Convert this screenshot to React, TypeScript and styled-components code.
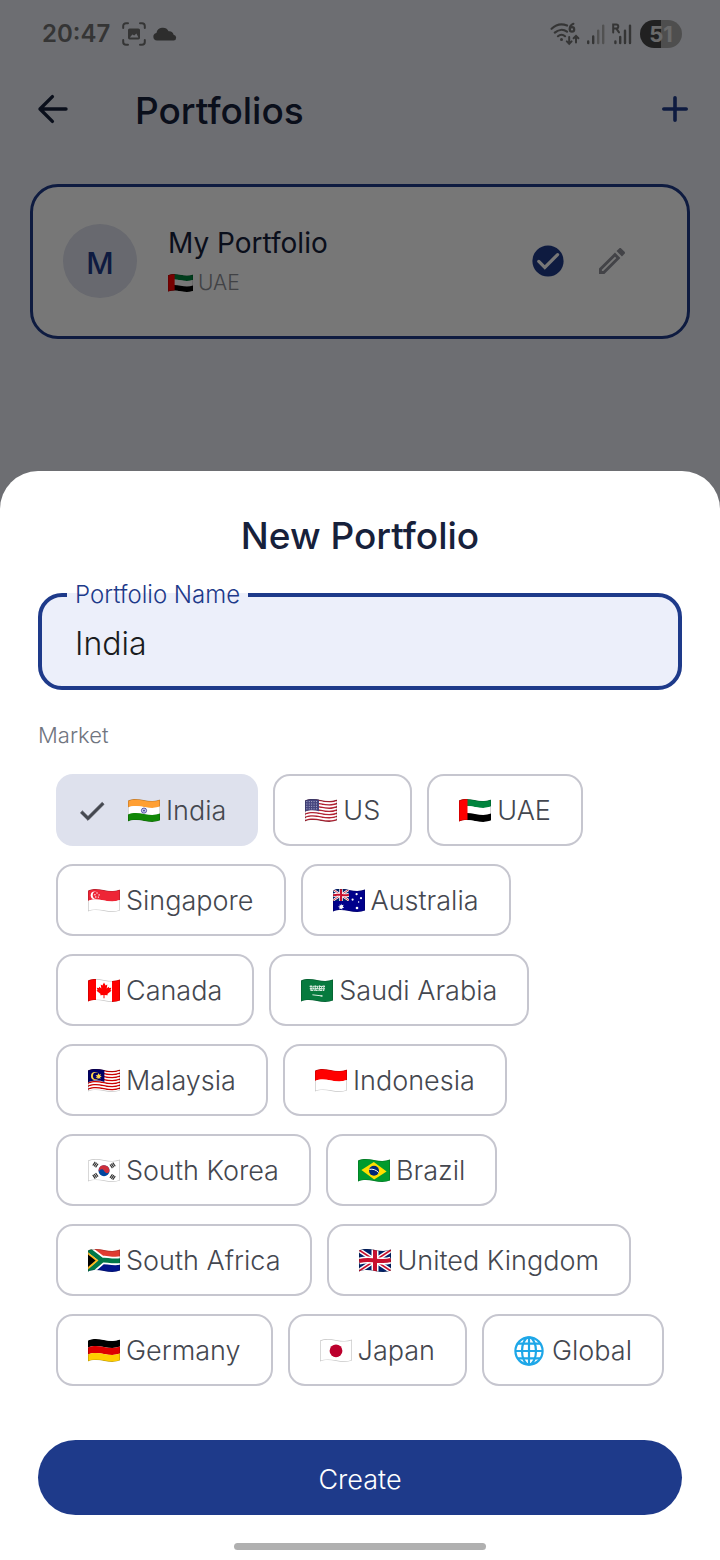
import React, { useId, useState } from "react";
import styled, { createGlobalStyle } from "styled-components";

const color = {
  brand: "#1e3a8a",
  ink: "#17213b",
  page: "#e9ecf5",
  card: "#ffffff",
  tint: "#dee1ed",
  field: "#eceffa",
  line: "#c6c6cf",
  chipText: "#44474f",
  muted: "#70757f",
  status: "#727272",
};

const GlobalStyle = createGlobalStyle`
  *, *::before, *::after { box-sizing: border-box; }
  body { margin: 0; background: ${color.page}; }
  body, button, input { font-family: Inter, "Open Sans", sans-serif; }
`;

/* ---------- Flags ---------- */

const topEdge = (y: number) =>
  `M0 ${y + 1.5} C5 ${y - 0.5} 10 ${y - 0.2} 16 ${y + 1} S27 ${y + 2.5} 32 ${y + 0.6}`;
const band = (from: number, to: number) =>
  `${topEdge(from)} L32 ${to + 0.6} C27 ${to + 2.5} 22 ${to + 2.2} 16 ${to + 1} C10 ${to - 0.2} 5 ${to - 0.5} 0 ${to + 1.5} Z`;

const Bands = ({ colors, height = 21 }: { colors: string[]; height?: number }) => (
  <>
    {colors.map((c, i) => (
      <path
        key={i}
        d={band((i * height) / colors.length, ((i + 1) * height) / colors.length)}
        fill={c}
      />
    ))}
  </>
);

const UnionJack = () => (
  <>
    <path d="M-1 -1H33V25H-1Z" fill="#012169" />
    <path d="M0 1 L32 22 M32 1 L0 22" stroke="#fff" strokeWidth="4.4" />
    <path d="M0 1 L32 22 M32 1 L0 22" stroke="#c8102e" strokeWidth="1.6" />
    <path d="M16 -1V25 M0 12 C8 10 10 10.8 16 11.5 S26 13 32 11" stroke="#fff" strokeWidth="7" fill="none" />
    <path d="M16 -1V25 M0 12 C8 10 10 10.8 16 11.5 S26 13 32 11" stroke="#c8102e" strokeWidth="4" fill="none" />
  </>
);

const stripes = (a: string, b: string, n: number) =>
  Array.from({ length: n }, (_, i) => (i % 2 ? b : a));

const trigram = (x: number, y: number, angle: number) => (
  <g transform={`translate(${x} ${y}) rotate(${angle})`}>
    <path d="M-2.2 -1.7H2.2M-2.2 0H2.2M-2.2 1.7H2.2" stroke="#333" strokeWidth="1.2" />
  </g>
);

const flagArt: Record<string, React.ReactNode> = {
  India: (
    <>
      <Bands colors={["#ff9f33", "#ffffff", "#128807"]} />
      <circle cx="16" cy="11.6" r="2.6" fill="#c9cbea" stroke="#3a3a99" strokeWidth="0.8" />
      <circle cx="16" cy="11.6" r="0.9" fill="#3a3a99" />
    </>
  ),
  US: (
    <>
      <Bands colors={stripes("#b22334", "#ffffff", 13)} />
      <path d="M0 0 H14 V12.2 C10 11 5 10.5 0 12.6Z" fill="#46467f" />
      {[2.6, 5, 7.4, 9.8].map((y) => (
        <path key={y} d={`M1.4 ${y} H13.4`} stroke="#c7c7de" strokeWidth="0.9" strokeDasharray="0.9 1.5" />
      ))}
    </>
  ),
  UAE: (
    <>
      <Bands colors={["#00843d", "#ffffff", "#000000"]} />
      <path d="M0 0H8.5V24H0Z" fill="#ff0000" />
    </>
  ),
  Singapore: (
    <>
      <Bands colors={["#ee2536", "#ffffff"]} />
      <circle cx="6.6" cy="6.3" r="3.9" fill="#fff" />
      <circle cx="8.4" cy="6.3" r="3.7" fill="#ee2536" />
      <g fill="#fff">
        <circle cx="9" cy="4" r="0.7" />
        <circle cx="6.9" cy="5.7" r="0.7" />
        <circle cx="11.1" cy="5.9" r="0.7" />
        <circle cx="7.8" cy="8" r="0.7" />
        <circle cx="10.4" cy="8.1" r="0.7" />
      </g>
    </>
  ),
  Australia: (
    <>
      <path d="M0 0H32V24H0Z" fill="#00008b" />
      <svg x="0" y="0" width="16" height="12" viewBox="0 0 32 23" preserveAspectRatio="none">
        <UnionJack />
      </svg>
      <g fill="#fff">
        <path d="M8 14.4l.8 1.8 1.9-.4-.9 1.7 1.4 1.3-1.9.3-.1 2-1.2-1.5-1.8 1 .6-1.9-1.8-.9 1.9-.5-.5-1.9 1.4 1Z" />
        <circle cx="23.6" cy="5.2" r="1.1" />
        <circle cx="19.6" cy="10.6" r="1.1" />
        <circle cx="28" cy="9.2" r="1.1" />
        <circle cx="24" cy="19" r="1.3" />
        <circle cx="25.6" cy="13" r="0.7" />
      </g>
    </>
  ),
  Canada: (
    <>
      <path d="M0 0H32V24H0Z" fill="#fff" />
      <path d="M0 0H8V24H0ZM24 0H32V24H24Z" fill="#f00" />
      <path
        d="M16 3.6l1.6 2.8 1.7-.8-.6 3.8 1.9-1.7.6 1.4 2.1-.3-.8 2.1 1 .9-4.1 3.2.4 1.3-3.3-.4v3.4h-1v-3.4l-3.3.4.4-1.3-4.1-3.2 1-.9-.8-2.1 2.1.3.6-1.4 1.9 1.7-.6-3.8 1.7.8Z"
        fill="#f00"
      />
    </>
  ),
  "Saudi Arabia": (
    <>
      <path d="M0 0H32V24H0Z" fill="#067a3e" />
      <path d="M8.6 7.4H24M8.8 9.6H23.8M9.6 11.4H23.4" stroke="#d6eade" strokeWidth="1.3" strokeDasharray="2.4 .6 1.2 .5" />
      <path d="M10 6.4v5.2M12 7.4v3M14.2 6.4v5M16.4 7v3M18.4 6.4v5.2M20.6 7v3.4M22.8 6.4v5" stroke="#d6eade" strokeWidth="1" />
      <path d="M11.4 15.8 L21.8 17M20.2 16v1.8" stroke="#d6eade" strokeWidth="1" />
    </>
  ),
  Malaysia: (
    <>
      <Bands colors={stripes("#cc0000", "#ffffff", 14)} />
      <path d="M0 0H16.4V13 C11 11 5 11 0 13.4Z" fill="#000066" />
      <circle cx="7" cy="6.9" r="4" fill="#ffd84d" />
      <circle cx="8.3" cy="6.9" r="3.4" fill="#000066" />
      <path d="M10.5 4l.7 1.7 1.7-.6-.7 1.7 1.6.8-1.7.6.4 1.8-1.6-.9-1.1 1.4-.3-1.8-1.8.1 1.2-1.4-1.3-1.3 1.9.1Z" fill="#ffd84d" />
    </>
  ),
  Indonesia: <Bands colors={["#ff0000", "#ffffff"]} />,
  "South Korea": (
    <>
      <path d="M0 0H32V24H0Z" fill="#fff" />
      <circle cx="16" cy="11.7" r="5.5" fill="#0047a0" />
      <path d="M10.9 9.7 A5.5 5.5 0 0 1 21.4 12.6 C20 15 17.4 14.4 16.2 12 C15 9.6 12 9.6 10.9 12.8 A5.5 5.5 0 0 1 10.9 9.7Z" fill="#cd2e3a" />
      {trigram(7.4, 5.6, -56)}
      {trigram(24.6, 6.4, 56)}
      {trigram(7.4, 16.8, 56)}
      {trigram(24.6, 18, -56)}
    </>
  ),
  Brazil: (
    <>
      <path d="M0 0H32V24H0Z" fill="#009b2d" />
      <path d="M3.4 11 L15.8 3 28.6 12.4 16.2 20.4Z" fill="#fedf00" />
      <circle cx="16" cy="11.7" r="5" fill="#002776" />
      <path d="M11.4 10.4 C14.6 9.6 18.6 11 20.6 13.6" stroke="#fff" strokeWidth="1" fill="none" />
    </>
  ),
  "South Africa": (
    <>
      <path d="M0 0H32V12H0Z" fill="#e03c31" />
      <path d="M0 12H32V24H0Z" fill="#001489" />
      <path d="M-2 -1 L13.6 10.8 C20 11 26 13 33 11.4 M-2 25 L13.6 11.6" stroke="#fff" strokeWidth="8.4" fill="none" />
      <path d="M-2 -1 L13.6 10.8 C20 11 26 13 33 11.4 M-2 25 L13.6 11.6" stroke="#007749" strokeWidth="4.8" fill="none" />
      <path d="M-1 2.4 L10.4 11.4 -1 21.4Z" fill="#ffb81c" />
      <path d="M-1 4.8 L7.6 11.5 -1 18.8Z" fill="#000" />
    </>
  ),
  "United Kingdom": <UnionJack />,
  Germany: <Bands colors={["#000000", "#dd0000", "#ffce00"]} />,
  Japan: (
    <>
      <path d="M0 0H32V24H0Z" fill="#fff" />
      <circle cx="16" cy="11.8" r="6.4" fill="#bc002d" />
    </>
  ),
};

const FlagSvg = styled.svg<{ $w: number }>`
  display: block;
  flex: none;
  width: ${(p) => p.$w}px;
  height: auto;
`;

const Flag = ({ name, width = 32 }: { name: string; width?: number }) => {
  const clip = useId();
  if (name === "Global") {
    return (
      <FlagSvg $w={width} viewBox="0 0 32 32" fill="none" stroke="#1ea7e8" strokeWidth="2.2" aria-hidden>
        <circle cx="15" cy="16" r="13.6" />
        <ellipse cx="15" cy="16" rx="7" ry="13.6" />
        <path d="M15 2.4V29.6M1.4 16H28.6M3.8 8.6H26.2M3.8 23.4H26.2" />
      </FlagSvg>
    );
  }
  return (
    <FlagSvg $w={width} viewBox="0 0 32 24" aria-hidden>
      <clipPath id={clip}>
        <path d={band(0, 21)} />
      </clipPath>
      <g clipPath={`url(#${clip})`}>
        {flagArt[name]}
        <path d={band(0, 21)} fill="none" stroke="#000" strokeOpacity="0.22" strokeWidth="1.4" />
      </g>
    </FlagSvg>
  );
};

/* ---------- Screen behind the sheet ---------- */

const Screen = styled.div`
  display: grid;
  min-height: 100vh;
  color: ${color.ink};
`;

const Page = styled.main`
  grid-area: 1 / 1;
  background: ${color.page};
`;

const StatusBar = styled.div`
  display: flex;
  align-items: center;
  justify-content: space-between;
  height: 68px;
  padding: 0 38px 0 42px;
  color: ${color.status};
`;

const StatusGroup = styled.div<{ $gap: number }>`
  display: flex;
  align-items: center;
  gap: ${(p) => p.$gap}px;
`;

const Clock = styled.time`
  margin-right: 5px;
  font-size: 24px;
  font-weight: 600;
  line-height: 32px;
`;

const Battery = styled.div`
  width: 42px;
  height: 28px;
  border-radius: 14px;
  background: linear-gradient(90deg, #484848 50%, #a8a8a8 50%);
  color: #e4e4e4;
  font-size: 22px;
  font-weight: 700;
  line-height: 28px;
  text-align: center;
`;

const TopBar = styled.header`
  display: flex;
  align-items: center;
  height: 84px;
  padding: 0 30px 0 36px;
`;

const IconButton = styled.button`
  display: flex;
  padding: 0;
  border: 0;
  background: none;
  color: inherit;
  cursor: pointer;
`;

const PageTitle = styled.h1`
  flex: 1;
  margin: 0 0 0 65px;
  padding-top: 2px;
  font-size: 37px;
  font-weight: 500;
  line-height: 48px;
`;

const PortfolioCard = styled.section`
  display: flex;
  align-items: center;
  gap: 31px;
  margin: 32px 30px 0;
  padding: 37px 62px 38px 30px;
  border: 3px solid ${color.brand};
  border-radius: 28px;
  background: ${color.card};
`;

const Avatar = styled.div`
  flex: none;
  width: 74px;
  height: 74px;
  border-radius: 50%;
  background: ${color.tint};
  color: ${color.brand};
  font-size: 30px;
  font-weight: 500;
  line-height: 78px;
  text-align: center;
`;

const CardText = styled.div`
  flex: 1;
  display: flex;
  flex-direction: column;
  gap: 8px;
`;

const CardName = styled.h2`
  margin: 0;
  font-size: 28px;
  font-weight: 400;
  line-height: 36px;
`;

const CardMarket = styled.div`
  display: flex;
  align-items: center;
  gap: 5px;
  color: #8b8d94;
  font-size: 21px;
  font-weight: 300;
  line-height: 28px;
`;

const CardActions = styled.div`
  display: flex;
  align-items: center;
  gap: 35px;
`;

/* ---------- Bottom sheet ---------- */

const Scrim = styled.div`
  grid-area: 1 / 1;
  z-index: 1;
  display: flex;
  flex-direction: column;
  justify-content: flex-end;
  background: rgba(0, 0, 0, 0.535);
`;

const Sheet = styled.form`
  display: flex;
  flex-direction: column;
  padding: 41px 38px 10px;
  border-radius: 38px 38px 0 0;
  background: #ffffff;
`;

const SheetTitle = styled.h2`
  margin: 0 0 21px;
  font-size: 37px;
  font-weight: 500;
  line-height: 48px;
  text-align: center;
`;

const Field = styled.fieldset`
  margin: 0;
  min-width: 0;
  padding: 14px 25px 23px;
  border: 4px solid ${color.brand};
  border-radius: 24px;
  background: ${color.field};
`;

const FieldLabel = styled.legend`
  padding: 0 8px;
  color: ${color.brand};
  font-size: 24px;
  font-weight: 300;
  line-height: 28px;
`;

const FieldInput = styled.input`
  display: block;
  width: 100%;
  height: 40px;
  padding: 0 8px;
  border: 0;
  outline: 0;
  background: transparent;
  color: #1a1c20;
  font-size: 32px;
  font-weight: 300;
`;

const MarketGroup = styled.fieldset`
  margin: 31px 0 0;
  min-width: 0;
  padding: 0;
  border: 0;
`;

const MarketLegend = styled.legend`
  padding: 0;
  color: ${color.muted};
  font-size: 22px;
  font-weight: 300;
  line-height: 28px;
`;

const ChipList = styled.div`
  display: flex;
  flex-wrap: wrap;
  gap: 18px 15px;
  padding: 25px 0 0 18px;
`;

const Chip = styled.label<{ $on: boolean }>`
  display: flex;
  align-items: center;
  gap: 20px;
  height: 72px;
  padding: 2px 30px 0 ${(p) => (p.$on ? 18 : 30)}px;
  border: 2px solid ${(p) => (p.$on ? color.tint : color.line)};
  border-radius: 17px;
  background: ${(p) => (p.$on ? color.tint : "#ffffff")};
  color: ${color.chipText};
  cursor: pointer;
`;

const ChipRadio = styled.input`
  appearance: none;
  position: absolute;
  width: 1px;
  height: 1px;
  margin: 0;
  opacity: 0;
`;

const ChipText = styled.span`
  display: flex;
  align-items: center;
  gap: 6px;
  font-size: 27px;
  font-weight: 300;
  line-height: 36px;
  white-space: nowrap;
`;

const CreateButton = styled.button`
  height: 75px;
  margin-top: 54px;
  padding: 3px 0 0;
  border: 0;
  border-radius: 38px;
  background: ${color.brand};
  color: #ffffff;
  font-size: 27px;
  font-weight: 300;
  cursor: pointer;
`;

const HomeBar = styled.div`
  align-self: center;
  width: 252px;
  height: 7px;
  margin-top: 28px;
  border-radius: 4px;
  background: #b0b0b0;
`;

const markets = [
  "India", "US", "UAE", "Singapore", "Australia", "Canada", "Saudi Arabia", "Malaysia",
  "Indonesia", "South Korea", "Brazil", "South Africa", "United Kingdom", "Germany", "Japan", "Global",
];

const ScanIcon = () => (
  <svg width="24" height="24" viewBox="0 0 24 24" fill="none" stroke="currentColor" strokeWidth="2" strokeLinecap="round" aria-hidden>
    <path d="M1.2 6V4A2.8 2.8 0 0 1 4 1.2H6M18 1.2h2A2.8 2.8 0 0 1 22.8 4v2M22.8 18v2a2.8 2.8 0 0 1-2.8 2.8h-2M6 22.8H4A2.8 2.8 0 0 1 1.2 20v-2" />
    <rect x="6" y="6.4" width="12" height="11" rx="1.6" fill="currentColor" stroke="none" />
    <path d="M7.8 15.4l2.6-3 1.8 1.2 2.2-2.2 2 4Z" fill={color.page} stroke="none" />
  </svg>
);

const CloudIcon = () => (
  <svg width="24" height="14" viewBox="0 0 24 14" fill="#606060" aria-hidden>
    <path d="M4 13.6A3.9 3.9 0 0 1 3.4 5.9 6.6 6.6 0 0 1 15.6 4.2a4.6 4.6 0 0 1 5 3.5 3 3 0 0 1 .2 5.9Z" />
  </svg>
);

const WifiIcon = () => (
  <svg width="30" height="24" viewBox="0 0 30 24" fill="none" stroke="currentColor" strokeWidth="2.2" strokeLinecap="round" aria-hidden>
    <path d="M1.6 6.8C6 2.6 12 1.6 17 3.6M4.8 10.6c3.4-3 8.4-3.6 12.2-1M8 14.2c2-1.8 5-1.8 7 0" />
    <circle cx="11.5" cy="17.6" r="1.5" fill="currentColor" stroke="none" />
    <path d="M23.4 1.8C20.6 3 19.6 5.4 19.8 7.2" />
    <circle cx="22" cy="7.4" r="2.2" />
    <path d="M19.2 15v6.6M16.8 19.4l2.4 2.4 2.4-2.4M26 20.4V14.2M23.6 16.2l2.4-2.4 2.4 2.4" strokeWidth="2" />
  </svg>
);

const SignalIcon = () => (
  <svg width="18" height="22" viewBox="1 0 18 22" stroke="currentColor" strokeWidth="2.4" strokeLinecap="round" aria-hidden>
    <path d="M2.2 18.4V20M7.2 13.4V20" />
    <path d="M12.2 7.6V20M17.2 2.6V20" stroke="#aeaeae" />
  </svg>
);

const RoamingIcon = () => (
  <svg width="21" height="22" viewBox="0 0 21 22" fill="none" stroke="currentColor" strokeWidth="2.4" strokeLinecap="round" aria-hidden>
    <path d="M3.4 18.4V20M8.2 14V20M13 7.6V20M18 2.6V20" />
    <path d="M1.2 9.4V1.4h3a2.1 2.1 0 0 1 0 4.2H1.2M4.4 5.6l2.6 3.8" strokeWidth="2" />
  </svg>
);

const App = () => {
  const [name, setName] = useState("India");
  const [market, setMarket] = useState("India");

  return (
    <>
      <GlobalStyle />
      <Screen>
        <Page>
          <StatusBar>
            <StatusGroup $gap={7}>
              <Clock>20:47</Clock>
              <ScanIcon />
              <CloudIcon />
            </StatusGroup>
            <StatusGroup $gap={7}>
              <WifiIcon />
              <SignalIcon />
              <RoamingIcon />
              <Battery>51</Battery>
            </StatusGroup>
          </StatusBar>
          <TopBar>
            <IconButton type="button" aria-label="Back">
              <svg width="34" height="32" viewBox="0 0 34 32" fill="none" stroke="currentColor" strokeWidth="3.4" strokeLinecap="round" strokeLinejoin="round">
                <path d="M30 15H4M16.4 2.6L4 15l12.4 12.4" />
              </svg>
            </IconButton>
            <PageTitle>Portfolios</PageTitle>
            <IconButton type="button" aria-label="Add portfolio">
              <svg width="30" height="32" viewBox="0 0 30 32" stroke={color.brand} strokeWidth="3.6" strokeLinecap="round">
                <path d="M15 3.8V26.2M3.8 15H26.2" />
              </svg>
            </IconButton>
          </TopBar>
          <PortfolioCard>
            <Avatar>M</Avatar>
            <CardText>
              <CardName>My Portfolio</CardName>
              <CardMarket>
                <Flag name="UAE" width={25} />
                UAE
              </CardMarket>
            </CardText>
            <CardActions>
              <svg width="32" height="32" viewBox="0 0 32 32" role="img" aria-label="Selected">
                <circle cx="16" cy="16" r="15.6" fill={color.brand} />
                <path d="M6.8 16.4l6 6L25.6 9.6" fill="none" stroke="#fff" strokeWidth="3.2" strokeLinecap="round" />
              </svg>
              <IconButton type="button" aria-label="Edit portfolio">
                <svg width="26" height="26" viewBox="3 3 18 18" fill="#8f9199">
                  <path d="M14.06 9.02l.92.92L5.92 19H5v-.92l9.06-9.06M17.66 3c-.25 0-.51.1-.7.29l-1.83 1.83 3.75 3.75 1.83-1.83c.39-.39.39-1.02 0-1.41l-2.34-2.34c-.2-.2-.45-.29-.71-.29zm-3.6 3.19L3 17.25V21h3.75L17.81 9.94l-3.75-3.75z" />
                </svg>
              </IconButton>
            </CardActions>
          </PortfolioCard>
        </Page>

        <Scrim>
          <Sheet onSubmit={(e) => e.preventDefault()} aria-labelledby="sheet-title">
            <SheetTitle id="sheet-title">New Portfolio</SheetTitle>
            <Field>
              <FieldLabel>
                <label htmlFor="portfolio-name">Portfolio Name</label>
              </FieldLabel>
              <FieldInput id="portfolio-name" value={name} onChange={(e) => setName(e.target.value)} />
            </Field>

            <MarketGroup>
              <MarketLegend>Market</MarketLegend>
              <ChipList>
                {markets.map((m) => (
                  <Chip key={m} $on={m === market}>
                    <ChipRadio type="radio" name="market" value={m} checked={m === market} onChange={() => setMarket(m)} />
                    {m === market && (
                      <svg width="32" height="32" viewBox="0 0 24 24" fill="currentColor" stroke="currentColor" strokeWidth="0.7" aria-hidden>
                        <path d="M9 16.17L4.83 12l-1.42 1.41L9 19 21 7l-1.41-1.41z" />
                      </svg>
                    )}
                    <ChipText>
                      <Flag name={m} />
                      {m}
                    </ChipText>
                  </Chip>
                ))}
              </ChipList>
            </MarketGroup>

            <CreateButton type="submit">Create</CreateButton>
            <HomeBar />
          </Sheet>
        </Scrim>
      </Screen>
    </>
  );
};

export default App;
